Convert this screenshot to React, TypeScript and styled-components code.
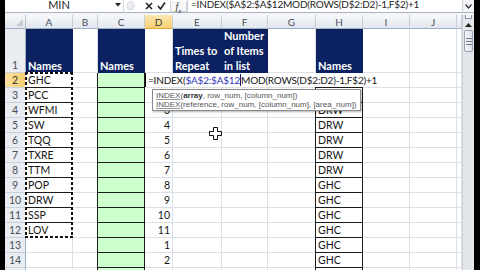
import React from 'react';
import styled, { createGlobalStyle, css } from 'styled-components';

const GlobalStyle = createGlobalStyle`
  html, body { margin: 0; padding: 0; background: #000; }
  body { font-family: Lato, "Liberation Sans", Arial, sans-serif; }
  #root { width: 480px; height: 270px; }
`;

const Screen = styled.div`
  width: 480px;
  height: 270px;
  box-sizing: border-box;
  padding-left: 5px;
  background: #000;
  display: flex;
  overflow: hidden;
`;

const Window = styled.div`
  width: 469px;
  height: 270px;
  display: flex;
  flex-direction: column;
  background: #fff;
  overflow: hidden;
`;

/* ---------- formula bar ---------- */
const FormulaBar = styled.div`
  height: 12px;
  flex: none;
  display: flex;
  border-bottom: 1px solid #a9b3c0;
  background: #fff;
  font-size: 11px;
  line-height: 11px;
  color: #1e1e1e;
`;

const NameBox = styled.div`
  width: 108px;
  display: flex;
  justify-content: center;
  align-items: flex-end;
  padding-bottom: 2px;
  box-sizing: border-box;
`;

const DropArrow = styled.div`
  width: 10px;
  display: flex;
  align-items: center;
  justify-content: center;
  padding-bottom: 2px;
  box-sizing: border-box;
`;

const FxArea = styled.div`
  width: 64px;
  display: flex;
  align-items: center;
  border-left: 1px solid #d3d8df;
  box-sizing: border-box;
  padding-left: 2px;
`;

const Grip = styled.span`
  width: 7px;
  height: 8px;
  border-radius: 50%;
  background: radial-gradient(circle at 40% 40%, #f4f5f7, #d7dbe1);
  border: 1px solid #e1e4e8;
  margin-right: 8px;
`;

const ToolIcon = styled.span`
  width: 12px;
  height: 11px;
  display: flex;
  align-items: center;
  justify-content: center;
`;

const FxButton = styled.span`
  margin-left: 3px;
  width: 17px;
  height: 11px;
  border: 1px solid #cfd4da;
  border-top: none;
  box-sizing: border-box;
  display: flex;
  align-items: flex-end;
  justify-content: center;
  font-family: "Liberation Serif", serif;
  font-style: italic;
  font-size: 10px;
  line-height: 9px;
  color: #333;
  background: #f6f7f9;
`;

const FxSub = styled.sub`
  font-size: 7px;
  line-height: 0;
`;

const FormulaInput = styled.div`
  flex: 1;
  display: flex;
  align-items: flex-end;
  padding: 0 0 2px 3px;
  box-sizing: border-box;
  border-left: 1px solid #c9d0da;
  white-space: nowrap;
  overflow: hidden;
  font-size: 10px;
  letter-spacing: -0.2px;
`;

const ExpandButton = styled.div`
  width: 11px;
  display: flex;
  align-items: center;
  justify-content: center;
  border-left: 1px solid #c9d0da;
  background: #f2f4f7;
`;

const Band = styled.div`
  height: 2px;
  flex: none;
  background: #f3f5f8;
`;

/* ---------- body ---------- */
const Body = styled.div`
  flex: 1;
  display: flex;
  overflow: hidden;
`;

const Sheet = styled.div`
  position: relative;
  width: 457px;
  flex: none;
  display: grid;
  grid-template-columns: 21px 47px 25px 47px 28px 49px 46px 48px 47px 47px 47px 5px;
  grid-template-rows: 14px 44px repeat(15, 15px);
  overflow: hidden;
  align-content: start;
`;

const Corner = styled.div`
  position: relative;
  box-sizing: border-box;
  background: linear-gradient(#f5f7fa, #e3e7ed);
  border-right: 1px solid #b9c3d0;
  border-bottom: 1px solid #9fb0c4;
  &::after {
    content: '';
    position: absolute;
    right: 2px;
    bottom: 2px;
    width: 0;
    height: 0;
    border-left: 7px solid transparent;
    border-bottom: 7px solid #c5ccd5;
  }
`;

const ColHead = styled.div<{ $active?: boolean }>`
  box-sizing: border-box;
  display: flex;
  align-items: center;
  justify-content: center;
  font-size: 10px;
  color: #4a4f57;
  background: linear-gradient(#f6f8fb, #e2e7ee);
  border-right: 1px solid #c7ced8;
  border-bottom: 1px solid #9fb0c4;
  ${p =>
    p.$active &&
    css`
      background: linear-gradient(#fde9b2, #f7cf72);
      border-bottom-color: #e6a93c;
      color: #3a3a3a;
    `}
`;

const RowHead = styled.div<{ $active?: boolean; $tall?: boolean }>`
  box-sizing: border-box;
  display: flex;
  align-items: ${p => (p.$tall ? 'flex-end' : 'center')};
  justify-content: center;
  font-size: 10.5px;
  line-height: 13px;
  color: #4a4f57;
  background: #e9edf2;
  border-right: 1px solid #9fb0c4;
  border-bottom: 1px solid #c9d1dc;
  ${p =>
    p.$active &&
    css`
      background: linear-gradient(90deg, #fbe1a0, #f6cd6e);
      color: #3a3a3a;
    `}
`;

type Tone = 'navy' | 'green' | undefined;

const Cell = styled.div<{ $tone?: Tone; $boxed?: boolean; $right?: boolean }>`
  box-sizing: border-box;
  display: flex;
  align-items: flex-end;
  justify-content: ${p => (p.$right ? 'flex-end' : 'flex-start')};
  padding: 0 2px;
  font-size: 10.5px;
  line-height: 14px;
  color: #151515;
  white-space: nowrap;
  border-right: 1px solid #dcdfe4;
  border-bottom: 1px solid #dcdfe4;
  ${p =>
    p.$tone === 'green' &&
    css`
      background: #ccffcc;
    `}
  ${p =>
    p.$tone === 'navy' &&
    css`
      background: #0b2161;
      border-right-color: #0b2161;
      border-bottom: none;
      color: #fff;
      font-weight: 700;
      font-size: 11px;
      line-height: 15px;
    `}
  ${p =>
    p.$boxed &&
    css`
      border-right-color: #1a1a1a;
      border-bottom-color: #1a1a1a;
      box-shadow: -1px 0 0 #1a1a1a;
    `}
`;

const ActiveCell = styled(Cell)`
  position: relative;
  z-index: 3;
  overflow: visible;
`;

const Editor = styled.div`
  position: absolute;
  left: 0;
  top: 0;
  bottom: 0;
  display: flex;
  align-items: flex-end;
  padding: 0 3px 0 2px;
  background: #fff;
  border-left: 1px solid #000;
  font-size: 10px;
  letter-spacing: -0.2px;
  line-height: 14px;
  color: #151515;
  white-space: nowrap;
`;

const RangeRef = styled.span`
  color: #3137b8;
`;

const Caret = styled.span`
  display: inline-block;
  width: 0;
  height: 12px;
  border-left: 1px solid #1a1a60;
  margin-bottom: 1px;
`;

const Tooltip = styled.div`
  position: absolute;
  left: 7px;
  top: 16px;
  padding: 1px 3px;
  background: #fff;
  border: 1px solid #8a8a8a;
  box-shadow: 1px 1px 2px rgba(0, 0, 0, 0.3);
  font-family: "Liberation Sans", Arial, sans-serif;
  font-size: 8px;
  line-height: 9px;
  color: #555;
  white-space: nowrap;
`;

const FnLink = styled.span`
  text-decoration: underline;
  text-decoration-color: #999;
`;

const CurrentArg = styled.b`
  color: #333;
`;

const Ants = styled.div`
  position: absolute;
  grid-column: 2 / 3;
  grid-row: 3 / 14;
  inset: -1px 0 0 -1px;
  pointer-events: none;
  z-index: 2;
  background:
    repeating-linear-gradient(90deg, #111 0 3px, #fff 3px 5px) top / 100% 2px no-repeat,
    repeating-linear-gradient(90deg, #111 0 3px, #fff 3px 5px) bottom / 100% 2px no-repeat,
    repeating-linear-gradient(180deg, #111 0 3px, #fff 3px 5px) left / 2px 100% no-repeat,
    repeating-linear-gradient(180deg, #111 0 3px, #fff 3px 5px) right / 2px 100% no-repeat;
`;

const Pointer = styled.svg`
  position: absolute;
  left: 204px;
  top: 112px;
  z-index: 5;
`;

/* ---------- scrollbar ---------- */
const VScroll = styled.div`
  width: 12px;
  flex: none;
  display: flex;
  flex-direction: column;
  align-items: stretch;
  background: #e3e6ea;
  border-left: 1px solid #c9cfd7;
  box-sizing: border-box;
`;

const SplitBox = styled.div`
  height: 3px;
  margin: 0 2px;
  border: 1px solid #8e99a7;
  border-top: none;
  background: #f4f5f7;
`;

const ScrollButton = styled.div`
  height: 11px;
  display: flex;
  align-items: center;
  justify-content: center;
`;

const Thumb = styled.div`
  height: 20px;
  margin: 0 1px;
  border: 1px solid #9aa5b4;
  border-radius: 2px;
  background: linear-gradient(90deg, #f4f6f8, #dde2e9);
  display: flex;
  flex-direction: column;
  align-items: center;
  justify-content: center;
  gap: 2px;
`;

const GripLine = styled.span`
  width: 6px;
  height: 1px;
  background: #707c8b;
`;

/* ---------- data ---------- */
const COLS = ['A', 'B', 'C', 'D', 'E', 'F', 'G', 'H', 'I', 'J', 'K'];
const ROWS = Array.from({ length: 15 }, (_, i) => i + 1);
const NAMES = ['GHC', 'PCC', 'WFMI', 'SW', 'TQQ', 'TXRE', 'TTM', 'POP', 'DRW', 'SSP', 'LOV'];
const REPEAT = ['2', '3', '4', '5', '6', '7', '8', '9', '10', '11', '1', '2', '3'];

const HEADERS: Record<string, React.ReactNode> = {
  A: 'Names',
  C: 'Names',
  E: (
    <span>
      Times to
      <br />
      Repeat
    </span>
  ),
  F: (
    <span>
      Number
      <br />
      of Items
      <br />
      in list
    </span>
  ),
  H: 'Names',
};

function renderCell(col: string, row: number) {
  const key = `${col}${row}`;
  if (row === 1) {
    const h = HEADERS[col];
    return h ? (
      <Cell key={key} $tone="navy">
        {h}
      </Cell>
    ) : (
      <Cell key={key} />
    );
  }
  if (col === 'A' && row <= 12) {
    return (
      <Cell key={key} $boxed>
        {NAMES[row - 2]}
      </Cell>
    );
  }
  if (col === 'C') return <Cell key={key} $tone="green" $boxed />;
  if (col === 'D') {
    if (row === 2) {
      return (
        <ActiveCell key={key}>
          <Editor>
            =INDEX(<RangeRef>$A$2:$A$12</RangeRef>
            <Caret />
            MOD(ROWS(D$2:D2)-1,F$2)+1
          </Editor>
          <Tooltip>
            <div>
              <FnLink>INDEX</FnLink>(<CurrentArg>array</CurrentArg>, row_num, [column_num])
            </div>
            <div>
              <FnLink>INDEX</FnLink>(reference, row_num, [column_num], [area_num])
            </div>
          </Tooltip>
        </ActiveCell>
      );
    }
    return (
      <Cell key={key} $right>
        {REPEAT[row - 3]}
      </Cell>
    );
  }
  if (col === 'H') {
    return (
      <Cell key={key} $boxed>
        {row <= 8 ? 'DRW' : 'GHC'}
      </Cell>
    );
  }
  return <Cell key={key} />;
}

export default function App() {
  return (
    <>
      <GlobalStyle />
      <Screen>
        <Window>
          <FormulaBar>
            <NameBox>MIN</NameBox>
            <DropArrow>
              <svg width="6" height="4" viewBox="0 0 6 4">
                <path d="M0 0 H6 L3 3.5 Z" fill="#222" />
              </svg>
            </DropArrow>
            <FxArea>
              <Grip />
              <ToolIcon>
                <svg width="8" height="8" viewBox="0 0 8 8">
                  <path d="M1 1 L7 7 M7 1 L1 7" stroke="#222" strokeWidth="1.6" />
                </svg>
              </ToolIcon>
              <ToolIcon>
                <svg width="9" height="8" viewBox="0 0 9 8">
                  <path d="M1 4 L3.5 7 L8 0.5" stroke="#222" strokeWidth="1.6" fill="none" />
                </svg>
              </ToolIcon>
              <FxButton>
                f<FxSub>x</FxSub>
              </FxButton>
            </FxArea>
            <FormulaInput>=INDEX($A$2:$A$12MOD(ROWS(D$2:D2)-1,F$2)+1</FormulaInput>
            <ExpandButton>
              <svg width="7" height="5" viewBox="0 0 7 5">
                <path d="M0.5 0.5 L3.5 4 L6.5 0.5" stroke="#333" strokeWidth="1.2" fill="none" />
              </svg>
            </ExpandButton>
          </FormulaBar>
          <Band />
          <Body>
            <Sheet>
              <Corner />
              {COLS.map(c => (
                <ColHead key={c} $active={c === 'D'}>
                  {c === 'K' ? '' : c}
                </ColHead>
              ))}
              {ROWS.map(r => (
                <React.Fragment key={r}>
                  <RowHead $active={r === 2} $tall={r === 1}>
                    {r}
                  </RowHead>
                  {COLS.map(c => renderCell(c, r))}
                </React.Fragment>
              ))}
              <Ants />
              <Pointer width="13" height="13" viewBox="0 0 13 13">
                <path
                  d="M4.5 0.5 H8.5 V4.5 H12.5 V8.5 H8.5 V12.5 H4.5 V8.5 H0.5 V4.5 H4.5 Z"
                  fill="#fff"
                  stroke="#111"
                  strokeWidth="1"
                />
              </Pointer>
            </Sheet>
            <VScroll>
              <SplitBox />
              <ScrollButton>
                <svg width="7" height="4" viewBox="0 0 7 4">
                  <path d="M0 4 L3.5 0 L7 4 Z" fill="#222" />
                </svg>
              </ScrollButton>
              <Thumb>
                <GripLine />
                <GripLine />
                <GripLine />
              </Thumb>
            </VScroll>
          </Body>
        </Window>
      </Screen>
    </>
  );
}
